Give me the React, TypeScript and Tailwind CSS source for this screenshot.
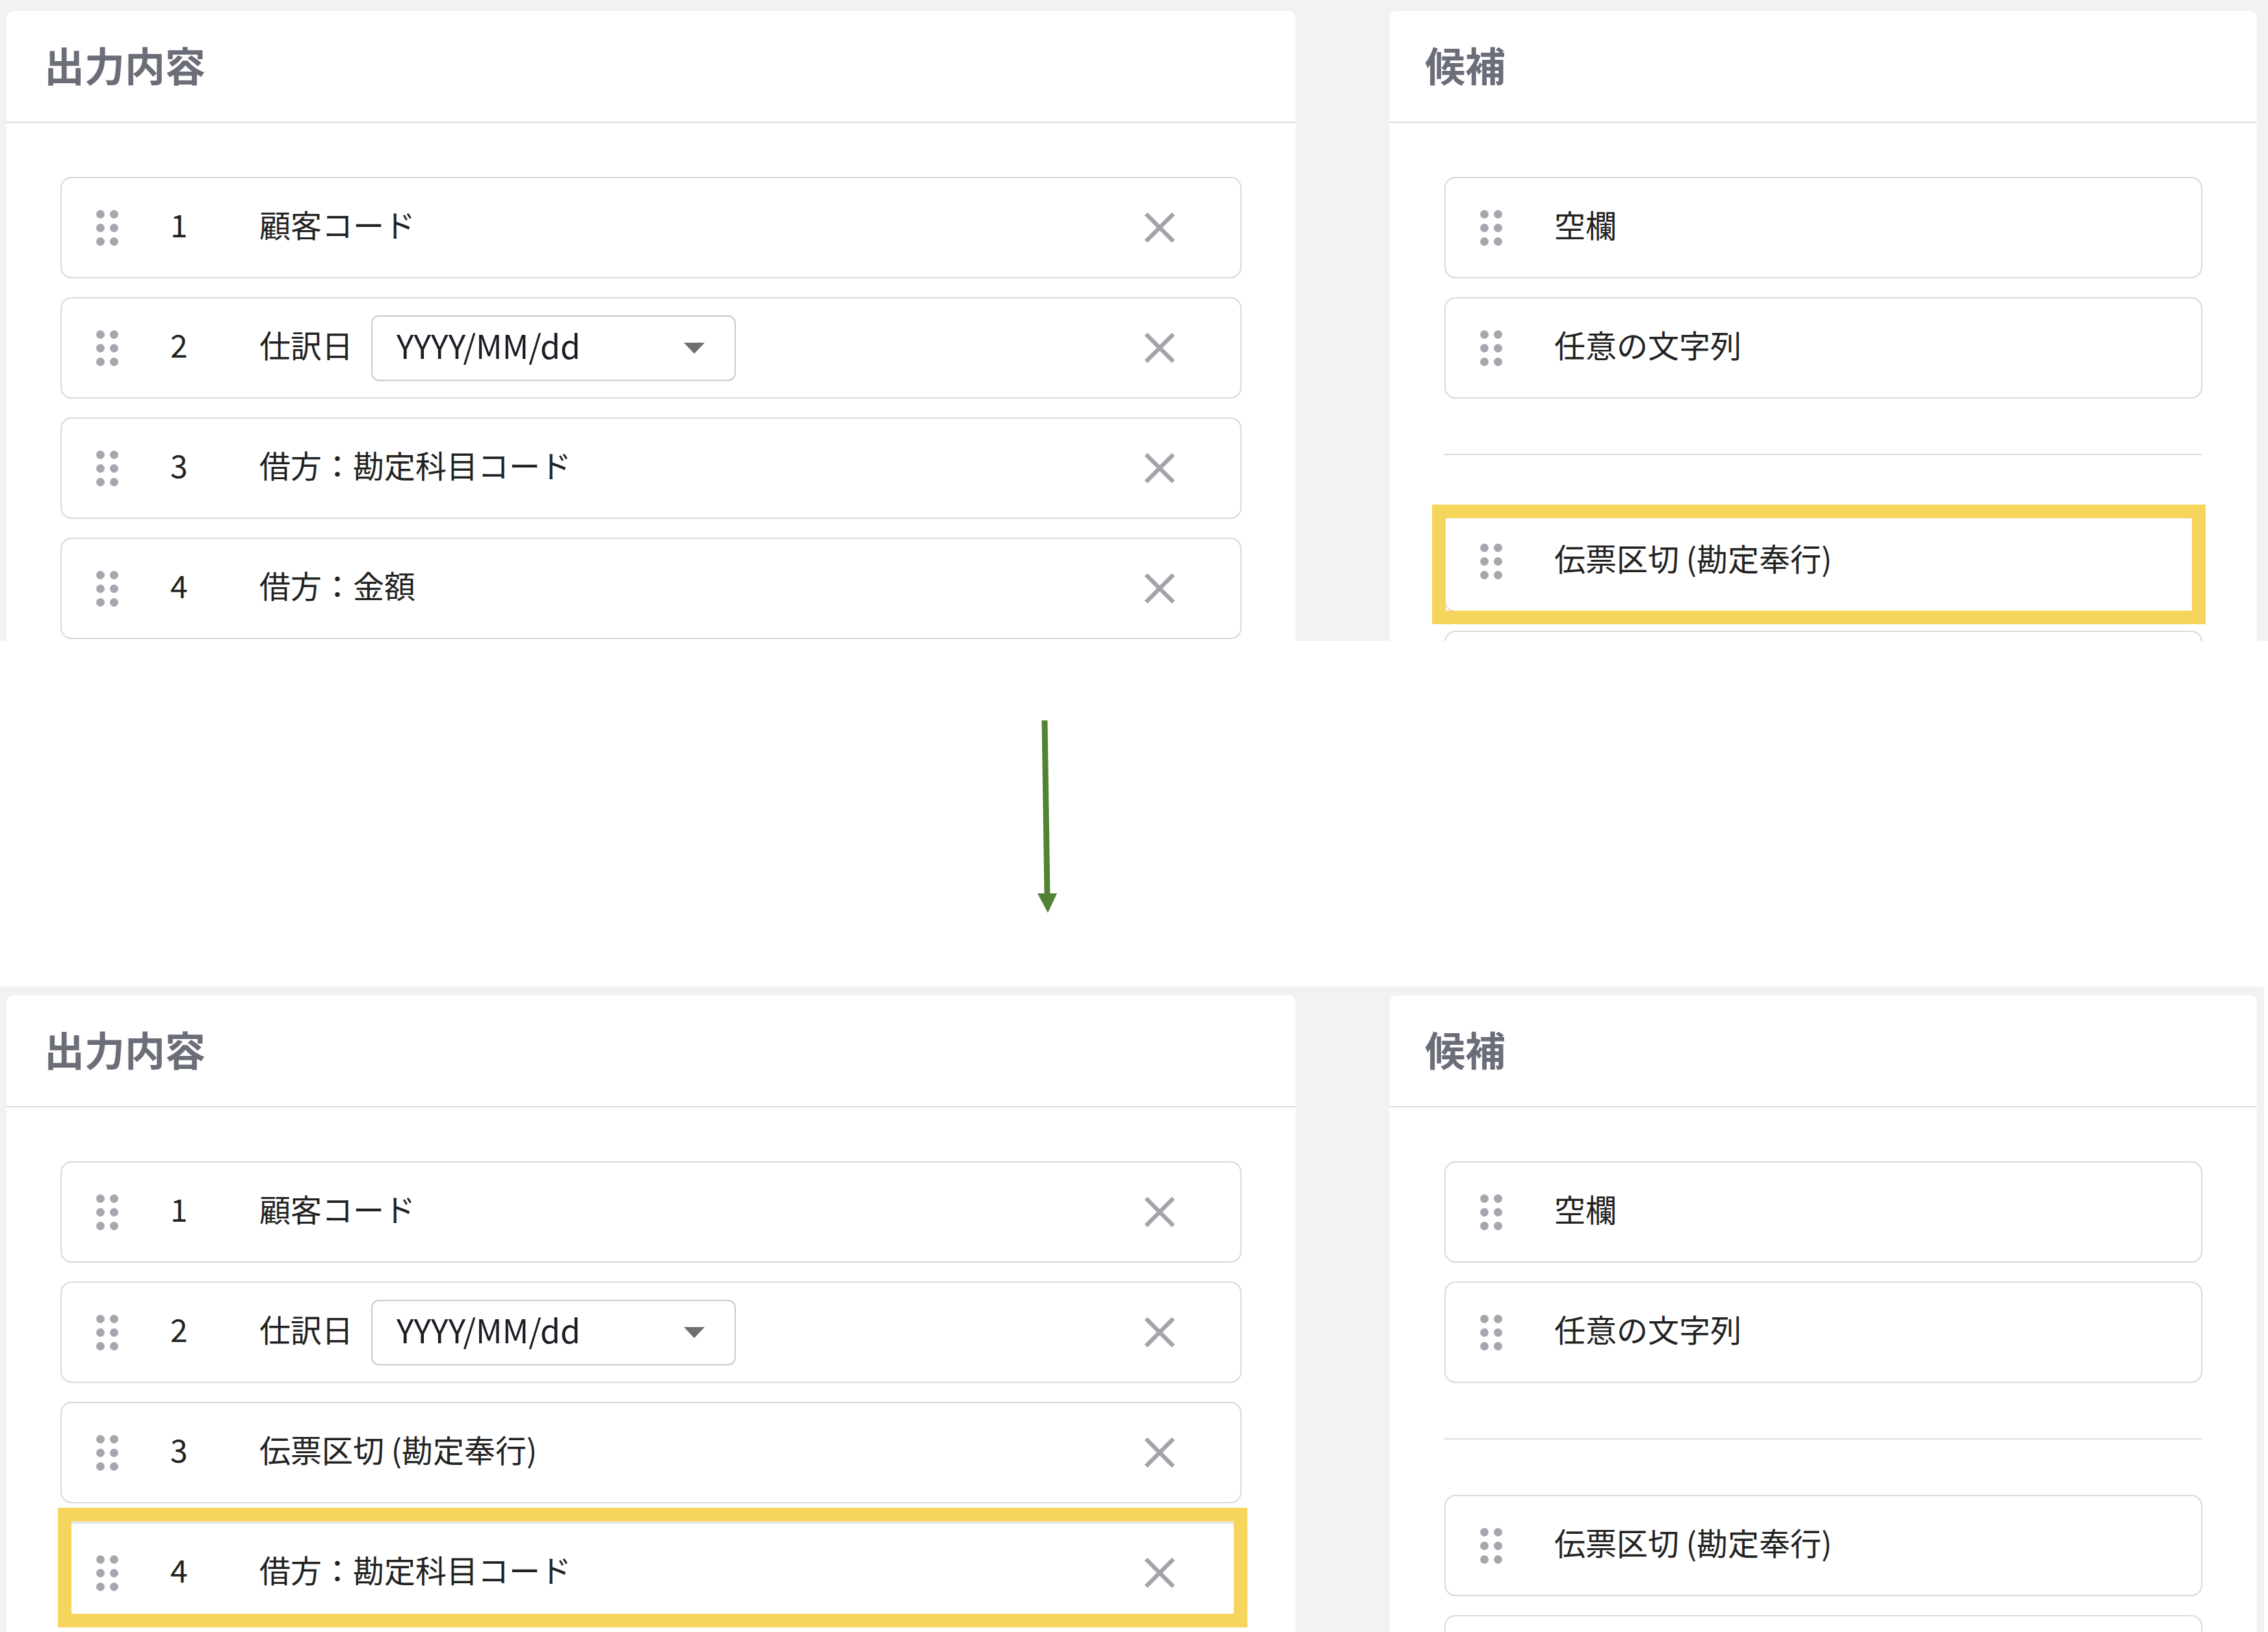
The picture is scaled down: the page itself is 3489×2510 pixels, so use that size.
import React from "react";

const FONT = "font-['Noto_Sans_CJK_JP','Noto_Sans',sans-serif]";

function Dots() {
  return (
    <div className="grid grid-cols-2 gap-x-[8px] gap-y-[8px] w-[34px] shrink-0">
      {Array.from({ length: 6 }).map((_, i) => (
        <span key={i} className="block w-[13px] h-[13px] rounded-full bg-[#a6a6ae]" />
      ))}
    </div>
  );
}

function XIcon() {
  return (
    <svg width="48" height="48" viewBox="0 0 48 48" className="block">
      <path d="M3 3 L45 45 M45 3 L3 45" stroke="#a3a3ac" strokeWidth="6.5" fill="none" />
    </svg>
  );
}

function DateSelect() {
  return (
    <div className="ml-[28px] w-[561px] h-[101px] shrink-0 border-2 border-[#c9c9c9] rounded-[12px] bg-white flex items-center justify-between pl-[37px] pr-[46px]">
      <span className="pb-[10px] text-[50px] leading-none text-[#1c1c24] whitespace-nowrap">YYYY/MM/dd</span>
      <svg width="32" height="17" viewBox="0 0 32 17" className="block">
        <polygon points="0,0 32,0 16,17" fill="#6f6f6f" />
      </svg>
    </div>
  );
}

function EmptyRow() {
  return <div className="h-[156px] shrink-0 rounded-[17px] border-2 border-[#d9d9de] bg-white" />;
}

function OutRow({ n, label, select }: { n: number; label: string; select?: boolean }) {
  return (
    <div className="h-[156px] shrink-0 rounded-[17px] border-2 border-[#d9d9de] bg-white flex items-center pl-[53px] pr-[100px]">
      <Dots />
      <span className="ml-[80px] w-[137px] shrink-0 pb-[12px] text-[48px] leading-none text-[#222]">{n}</span>
      <span className="pb-[12px] text-[48px] leading-none text-[#222] whitespace-nowrap">{label}</span>
      {select && <DateSelect />}
      <div className="ml-auto">
        <XIcon />
      </div>
    </div>
  );
}

function CandRow({ label }: { label: string }) {
  return (
    <div className="h-[156px] shrink-0 rounded-[17px] border-2 border-[#d9d9de] bg-white flex items-center pl-[53px]">
      <Dots />
      <span className="ml-[80px] pb-[12px] text-[48px] leading-none text-[#222] whitespace-nowrap">{label}</span>
    </div>
  );
}

function PanelHeader({ title, pl }: { title: string; pl: string }) {
  return (
    <div className={`h-[172px] border-b-2 border-[#dcdce0] flex items-center ${pl}`}>
      <span className="pb-[6px] text-[62px] leading-none font-bold text-[#6b6e78] whitespace-nowrap">{title}</span>
    </div>
  );
}

type Item = { label: string; select?: boolean };

function Screen({ items, sectionClass }: { items: Item[]; sectionClass: string }) {
  return (
    <div className={`${sectionClass} bg-[#f2f2f2] pl-[10px] flex items-start gap-[145px] overflow-hidden`}>
      <div className="w-[1983px] shrink-0 bg-white rounded-t-[10px]">
        <PanelHeader title="出力内容" pl="pl-[58px]" />
        <div className="px-[83px] pt-[83px] flex flex-col gap-[29px]">
          {items.map((it, i) => (
            <OutRow key={i} n={i + 1} label={it.label} select={it.select} />
          ))}
          <EmptyRow />
        </div>
      </div>
      <div className="w-[1334px] shrink-0 bg-white rounded-t-[10px]">
        <PanelHeader title="候補" pl="pl-[54px]" />
        <div className="px-[84px] pt-[83px]">
          <div className="flex flex-col gap-[29px]">
            <CandRow label="空欄" />
            <CandRow label="任意の文字列" />
          </div>
          <div className="my-[85px] h-[2px] bg-[#dcdce0]" />
          <div className="flex flex-col gap-[29px]">
            <CandRow label="伝票区切 (勘定奉行)" />
            <EmptyRow />
            <EmptyRow />
          </div>
        </div>
      </div>
    </div>
  );
}

export default function App() {
  const before: Item[] = [
    { label: "顧客コード" },
    { label: "仕訳日", select: true },
    { label: "借方：勘定科目コード" },
    { label: "借方：金額" },
  ];
  const after: Item[] = [
    { label: "顧客コード" },
    { label: "仕訳日", select: true },
    { label: "伝票区切 (勘定奉行)" },
    { label: "借方：勘定科目コード" },
  ];
  return (
    <div className={`${FONT} w-[3489px] h-[2510px] bg-white overflow-hidden`}>
      <div className="relative">
        <Screen items={before} sectionClass="w-[3489px] h-[986px] pt-[17px]" />
        <div className="absolute left-[2203px] top-[776px] w-[1190px] h-[184px] border-[21px] border-[#f6d55c]" />
      </div>
      <div className="h-[531px] pt-[122px] pl-[1596px]">
        <svg width="30" height="296" viewBox="0 0 30 296" className="block">
          <polygon points="6.5,0 15.5,0 19.5,268 10.5,268" fill="#548235" />
          <polygon points="0,266 30,266 16,296" fill="#548235" />
        </svg>
      </div>
      <div className="relative">
        <Screen items={after} sectionClass="w-[3483px] h-[993px] pt-[14px]" />
        <div className="absolute left-[89px] top-[802px] w-[1830px] h-[184px] border-[21px] border-[#f6d55c]" />
      </div>
    </div>
  );
}
